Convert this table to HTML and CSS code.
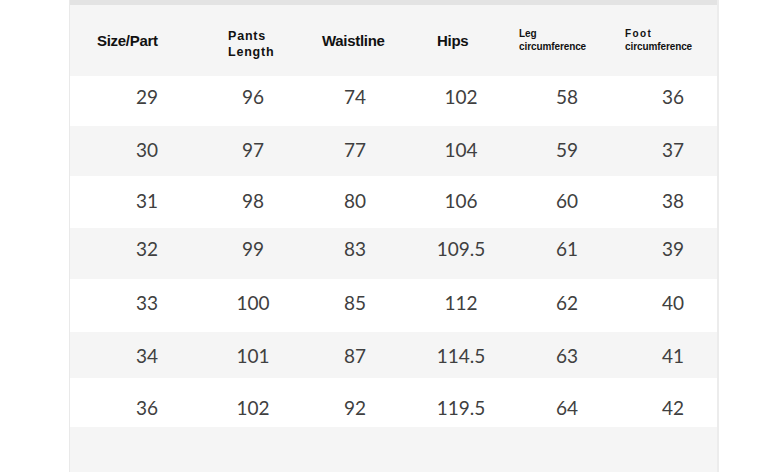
FILE: index.html
```html
<!DOCTYPE html>
<html>
<head>
<meta charset="utf-8">
<link rel="stylesheet" href="styles.css">
</head>
<body>
<div class="panel">
  <div class="strip"></div>
  <div class="row head">
    <div class="hc big"><span class="lbl">Size/Part</span></div>
    <div class="hc mid"><span class="lbl">Pants<br>Length</span></div>
    <div class="hc big"><span class="lbl">Waistline</span></div>
    <div class="hc big"><span class="lbl">Hips</span></div>
    <div class="hc small"><span class="lbl">Leg<br>circumference</span></div>
    <div class="hc small"><span class="lbl"><span class="spaced">Foot</span><br>circumference</span></div>
  </div>
  <div class="row"><div>29</div><div>96</div><div>74</div><div>102</div><div>58</div><div>36</div></div>
  <div class="row alt"><div>30</div><div>97</div><div>77</div><div>104</div><div>59</div><div>37</div></div>
  <div class="row"><div>31</div><div>98</div><div>80</div><div>106</div><div>60</div><div>38</div></div>
  <div class="row alt"><div>32</div><div>99</div><div>83</div><div>109.5</div><div>61</div><div>39</div></div>
  <div class="row"><div>33</div><div>100</div><div>85</div><div>112</div><div>62</div><div>40</div></div>
  <div class="row alt"><div>34</div><div>101</div><div>87</div><div>114.5</div><div>63</div><div>41</div></div>
  <div class="row"><div>36</div><div>102</div><div>92</div><div>119.5</div><div>64</div><div>42</div></div>
  <div class="foot"></div>
</div>
</body>
</html>
```
FILE: styles.css
```css
html, body {
  margin: 0;
  padding: 0;
  background: #ffffff;
}
body {
  width: 768px;
  height: 472px;
  overflow: hidden;
}
.panel {
  margin-left: 69px;
  width: 647px;
  height: 472px;
  border-left: 1px solid #e9e9e9;
  border-right: 2px solid #ececec;
  display: flex;
  flex-direction: column;
  background: #f5f5f5;
}
.strip {
  height: 5px;
  background: #e3e3e3;
}
.row {
  display: grid;
  grid-template-columns: repeat(6, 106px);
  padding-left: 24px;
  height: 50px;
  background: #ffffff;
  font-family: "Lato", "DejaVu Sans", sans-serif;
  font-size: 19px;
  color: #404040;
}
.row > div {
  display: flex;
  align-items: center;
  justify-content: center;
  padding-bottom: 4px;
}
.row > div:nth-child(n+3) {
  padding-right: 8px;
}
.row.alt {
  background: #f5f5f5;
}
.row:nth-child(3) > div { padding-bottom: 10px; }
.row:nth-child(5) { height: 52px; }
.row:nth-child(6) { height: 51px; }
.row:nth-child(6) > div { padding-bottom: 10px; }
.row:nth-child(7) { height: 53px; }
.row:nth-child(7) > div { padding-bottom: 6px; }
.row:nth-child(8) { height: 46px; }
.row:nth-child(8) > div { padding-bottom: 0; }
.row:nth-child(9) { height: 49px; }
.row:nth-child(9) > div { padding-bottom: 0; padding-top: 10px; }
.row.head {
  height: 71px;
  background: #f5f5f5;
  color: #111111;
  font-family: "Liberation Sans", "Arial", sans-serif;
  font-weight: bold;
}
.row.head > .hc {
  justify-content: flex-start;
  padding-bottom: 0;
  padding-right: 0;
}
.lbl {
  display: block;
  text-align: left;
  line-height: 1.15;
}
.hc.big {
  font-size: 15px;
  letter-spacing: -0.3px;
}
.hc.mid {
  font-size: 12.5px;
  letter-spacing: 0.8px;
  padding-top: 9px;
}
.hc.mid .lbl {
  line-height: 1.25;
}
.hc.small {
  font-size: 10px;
  letter-spacing: -0.1px;
  padding-bottom: 0 !important;
}
.hc.small .lbl {
  line-height: 1.25;
}
.spaced {
  letter-spacing: 1.4px;
}
.row.head > .hc:nth-child(1) { padding-left: 3px; }
.row.head > .hc:nth-child(2) { padding-left: 28px; }
.row.head > .hc:nth-child(3) { padding-left: 16px; }
.row.head > .hc:nth-child(4) { padding-left: 25px; }
.row.head > .hc:nth-child(5) { padding-left: 1px; }
.row.head > .hc:nth-child(6) { padding-left: 1px; }
.foot {
  flex: 1;
  background: #f5f5f5;
}
```
